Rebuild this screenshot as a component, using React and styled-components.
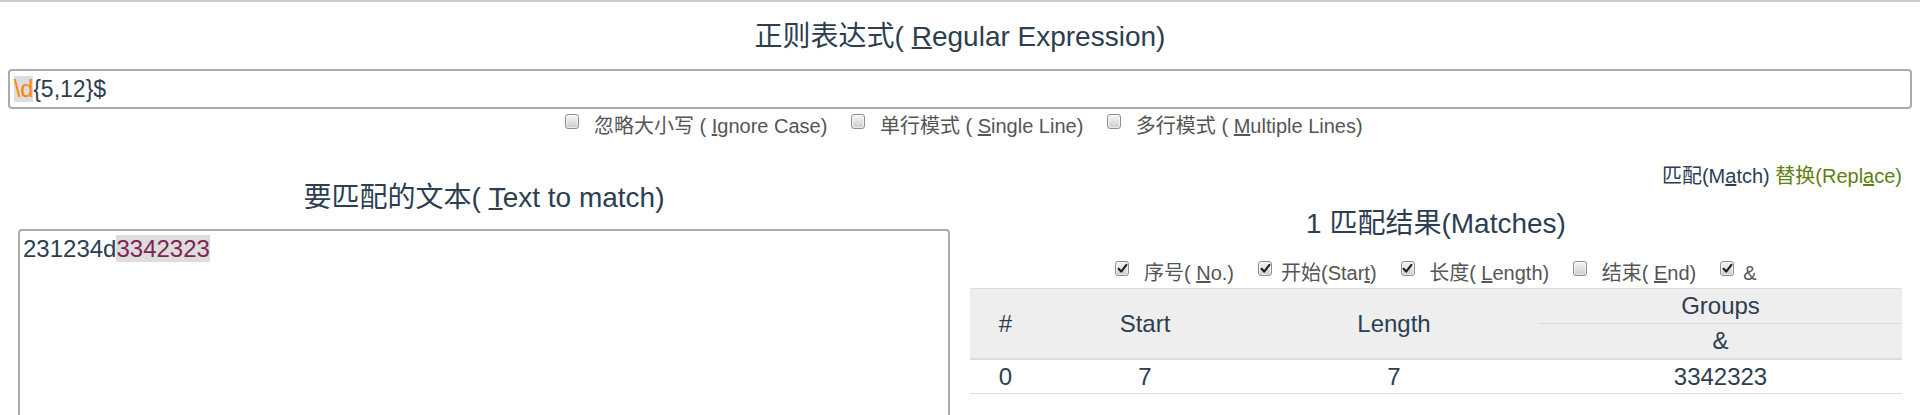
import React from "react";
import styled, { createGlobalStyle } from "styled-components";

const GlobalStyle = createGlobalStyle`
  html, body { margin: 0; padding: 0; background: #fff; }
  body {
    font-family: "Liberation Sans", Arial, "Noto Sans CJK SC", sans-serif;
    color: #2c3e50;
  }
  * { box-sizing: border-box; }
`;

const Page = styled.div`
  border-top: 2px solid #cacaca;
  padding: 0 8px;
`;

const Heading = styled.h3`
  margin: ${(p) => p.$mt}px 0 0;
  font-size: 28px;
  font-weight: normal;
  line-height: 32px;
  text-align: center;
  color: #2c3e50;
  white-space: pre;
`;

const Key = styled.u`
  text-decoration-thickness: 2px;
`;

const RegexField = styled.div`
  margin-top: 16px;
  height: 40px;
  border: 2px solid #ababab;
  border-radius: 4px;
  padding: 0 4px;
  font-size: 23px;
  line-height: 36px;
  color: #2c3e50;
  white-space: pre;
`;

const Token = styled.span`
  background: #dddddd;
  color: #ff8400;
`;

const OptionRow = styled.div`
  display: flex;
  justify-content: center;
  gap: 24px;
  margin-top: ${(p) => p.$mt}px;
  padding-left: ${(p) => p.$shift || 0}px;
`;

const Option = styled.label`
  display: flex;
  align-items: flex-start;
  font-size: 20px;
  line-height: 24px;
  color: #555;
  white-space: pre;
`;

const Box = styled.span`
  flex: none;
  width: 14px;
  height: 15px;
  margin-right: 9px;
  border: 1px solid #8e8e8e;
  border-radius: 3px;
  background: linear-gradient(#f6f6f6, #cccccc);
  box-shadow: inset 0 0 0 1px rgba(255, 255, 255, 0.55);
  display: flex;
  align-items: center;
  justify-content: center;
`;

const Columns = styled.div`
  display: grid;
  grid-template-columns: 1fr 1fr;
`;

const Column = styled.section`
  padding: 0 10px;
  min-width: 0;
`;

const ModeLinks = styled.div`
  margin-top: 26px;
  text-align: right;
  font-size: 20px;
  line-height: 24px;
  white-space: pre;
`;

const ModeLink = styled.span`
  color: ${(p) => (p.$active ? "#2c3e50" : "#5f7f10")};
`;

const TextField = styled.div`
  margin-top: 15px;
  height: 200px;
  border: 2px solid #ababab;
  border-radius: 4px;
  padding: 4px 3px;
  font-size: 24px;
  line-height: 27px;
  color: #2c3e50;
  white-space: pre;
`;

const Match = styled.span`
  background: #dddddd;
  color: #7f2354;
`;

const Table = styled.table`
  width: 100%;
  margin-top: 3px;
  border-collapse: collapse;
  table-layout: fixed;
  font-size: 24px;
  color: #2c3e50;
`;

const Col = styled.col`
  width: ${(p) => (p.$w ? `${p.$w}px` : "auto")};
`;

const Th = styled.th`
  background: #eeeeee;
  font-weight: normal;
  border-top: 1px solid #dddddd;
  border-bottom: ${(p) => (p.$last ? "2px solid #dddddd" : "0")};
  padding: 4px 8px;
  line-height: 26px;
  text-align: center;
  vertical-align: middle;
`;

const Td = styled.td`
  padding: 4px 8px 3px;
  border-bottom: 1px solid #dddddd;
  line-height: 26px;
  text-align: center;
`;

function Check({ checked }) {
  return (
    <Box>
      {checked && (
        <svg width="11" height="11" viewBox="0 0 11 11">
          <path
            d="M1.6 5.8 L4.2 8.6 L9.4 1.8"
            fill="none"
            stroke="#1d1d1d"
            strokeWidth="2.1"
            strokeLinecap="round"
            strokeLinejoin="round"
          />
        </svg>
      )}
    </Box>
  );
}

function Opt({ checked, children }) {
  return (
    <Option>
      <Check checked={checked} />
      <span>{children}</span>
    </Option>
  );
}

export default function App() {
  return (
    <>
      <GlobalStyle />
      <Page>
        <Heading $mt={19}>
          正则表达式( <Key>R</Key>egular Expression)
        </Heading>
        <RegexField>
          <Token>\d</Token>
          {"{5,12}$"}
        </RegexField>
        <OptionRow $mt={5} $shift={8}>
          <Opt>
            {" 忽略大小写 ( "}
            <Key>I</Key>gnore Case)
          </Opt>
          <Opt>
            {" 单行模式 ( "}
            <Key>S</Key>ingle Line)
          </Opt>
          <Opt>
            {" 多行模式 ( "}
            <Key>M</Key>ultiple Lines)
          </Opt>
        </OptionRow>

        <Columns>
          <Column>
            <Heading $mt={44}>
              要匹配的文本( <Key>T</Key>ext to match)
            </Heading>
            <TextField>
              231234d<Match>3342323</Match>
            </TextField>
          </Column>

          <Column>
            <ModeLinks>
              <ModeLink $active>
                匹配(M<Key>a</Key>tch)
              </ModeLink>{" "}
              <ModeLink>
                替换(Repl<Key>a</Key>ce)
              </ModeLink>
            </ModeLinks>
            <Heading $mt={20}>1 匹配结果(Matches)</Heading>
            <OptionRow $mt={21}>
              <Opt checked>
                {" 序号( "}
                <Key>N</Key>o.)
              </Opt>
              <Opt checked>
                开始(Star<Key>t</Key>)
              </Opt>
              <Opt checked>
                {" 长度( "}
                <Key>L</Key>ength)
              </Opt>
              <Opt>
                {" 结束( "}
                <Key>E</Key>nd)
              </Opt>
              <Opt checked>&amp;</Opt>
            </OptionRow>
            <Table>
              <colgroup>
                <Col $w={71} />
                <Col $w={208} />
                <Col $w={290} />
                <Col />
              </colgroup>
              <thead>
                <tr>
                  <Th rowSpan={2} $last>
                    #
                  </Th>
                  <Th rowSpan={2} $last>
                    Start
                  </Th>
                  <Th rowSpan={2} $last>
                    Length
                  </Th>
                  <Th>Groups</Th>
                </tr>
                <tr>
                  <Th $last>&amp;</Th>
                </tr>
              </thead>
              <tbody>
                <tr>
                  <Td>0</Td>
                  <Td>7</Td>
                  <Td>7</Td>
                  <Td>3342323</Td>
                </tr>
              </tbody>
            </Table>
          </Column>
        </Columns>
      </Page>
    </>
  );
}
